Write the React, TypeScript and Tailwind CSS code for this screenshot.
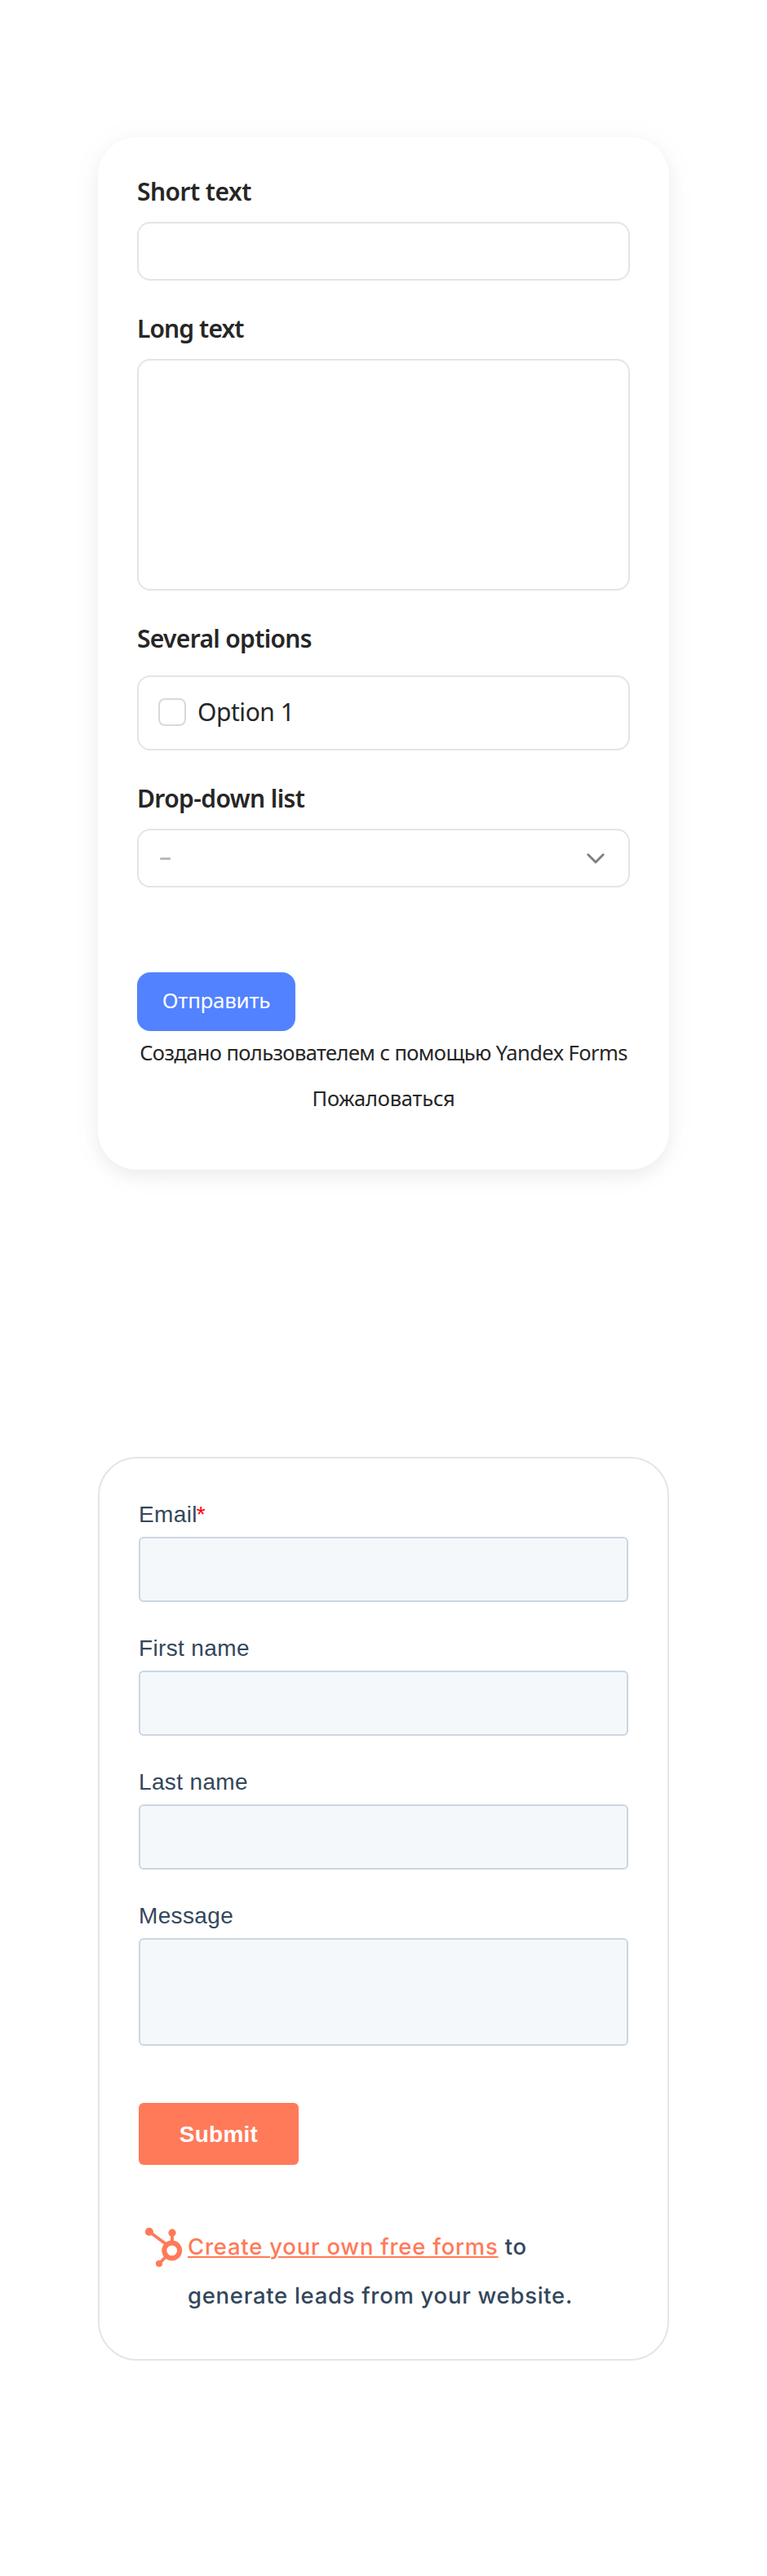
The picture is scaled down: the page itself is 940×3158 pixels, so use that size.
import React from "react";

const label =
  "h-9 w-max whitespace-nowrap pt-px text-[30px] leading-9 font-semibold";
const box = "rounded-2xl border-2 border-[#e5e5e5] bg-white";
const hubInput =
  "w-full rounded-md border-2 border-[#cbd6e2] bg-[#f5f8fa]";

function Field({ title, spacing, children }: { title: string; spacing: string; children: React.ReactNode }) {
  return (
    <div className="mb-10">
      <div className={`${label} ${spacing}`}>{title}</div>
      {children}
    </div>
  );
}

function HubField({ title, required, tall }: { title: string; required?: boolean; tall?: boolean }) {
  return (
    <div className="mb-9">
      <div className="mb-2 h-10 pt-px text-[28px] leading-10 tracking-[0.36px]">
        {title}
        {required && <span className="-ml-px text-[#ff0000]">*</span>}
      </div>
      <div className={`${hubInput} ${tall ? "h-[132px]" : "h-20"}`} />
    </div>
  );
}

function Sprocket() {
  return (
    <svg width="60" height="60" viewBox="170 2724 60 60" className="shrink-0" fill="#ff7a59" stroke="#ff7a59">
      <g stroke="none">
        <circle cx="182.9" cy="2736" r="5.1" />
        <circle cx="211" cy="2737.2" r="4.6" />
        <circle cx="195" cy="2775" r="4.1" />
      </g>
      <circle cx="210.7" cy="2759" r="9.4" fill="none" strokeWidth="6.1" />
      <path d="M183 2736L203 2750.8M211 2737v11M195 2775l8-8" fill="none" strokeWidth="3.8" />
    </svg>
  );
}

export default function App() {
  return (
    <main className="flex h-[3158px] w-[940px] flex-col items-center bg-white pt-[168px]">
      <section className="h-[1266px] w-[700px] rounded-[48px] bg-white p-12 font-['Noto_Sans','Open_Sans',sans-serif] text-[#262626] shadow-[0_8px_20px_rgba(0,0,0,0.05),0_4px_44px_rgba(0,0,0,0.04)]">
        <Field title="Short text" spacing="mb-5 tracking-[-0.55px]">
          <div className={`${box} h-[72px]`} />
        </Field>
        <Field title="Long text" spacing="mb-5 tracking-[-0.9px]">
          <div className={`${box} h-[284px]`} />
        </Field>
        <Field title="Several options" spacing="mb-7 tracking-[-0.68px]">
          <div className={`${box} flex h-[92px] items-center gap-3.5 pb-0.5 pl-6`}>
            <span className="size-[34px] rounded-lg border-2 border-[#d9d9d9]" />
            <span className="text-[30px] leading-9 tracking-[-0.45px]">Option 1</span>
          </div>
        </Field>
        <Field title="Drop-down list" spacing="mb-5 tracking-[-0.6px]">
          <div className={`${box} flex h-[72px] items-center justify-between pl-[25px] pr-7`}>
            <span className="pb-[5px] text-[30px] leading-9 text-[#b3b3b3]">–</span>
            <svg width="24" height="16" viewBox="0 0 24 16" fill="none" stroke="#808080" strokeWidth="3" strokeLinecap="round" strokeLinejoin="round">
              <path d="M2.8 3.8l9.2 9.2 9.2-9.2" />
            </svg>
          </div>
        </Field>
        <button className="mt-[104px] flex h-[72px] w-[194px] items-center justify-center rounded-2xl bg-[#5282ff] pb-1 text-[26px] tracking-[-0.3px] text-white">
          Отправить
        </button>
        <div className="mt-2 flex flex-col items-center gap-5 whitespace-nowrap text-[25.5px] leading-9">
          <span className="tracking-[-0.59px]">Создано пользователем с помощью Yandex Forms</span>
          <span className="tracking-[-0.2px]">Пожаловаться</span>
        </div>
      </section>

      <section className="mt-[352px] h-[1108px] w-[700px] rounded-[48px] border-2 border-[#e5e5e5] bg-white p-12 font-['Liberation_Sans',sans-serif] text-[#33475b]">
        <HubField title="Email" required />
        <HubField title="First name" />
        <HubField title="Last name" />
        <HubField title="Message" tall />
        <button className="mt-[34px] h-[76px] w-[196px] rounded-md bg-[#ff7a59] pt-0.5 text-[28px] font-bold tracking-[0.25px] text-white">
          Submit
        </button>
        <div className="mt-[70px] flex font-['Inter',sans-serif] text-[27.5px] leading-[60px] font-medium tracking-[0.7px]">
          <Sprocket />
          <p className="whitespace-nowrap">
            <span className="tracking-[0.76px] text-[#ff7a59] underline decoration-2 underline-offset-2">Create your own free forms</span> to
            <br />
            generate leads from your website.
          </p>
        </div>
      </section>
    </main>
  );
}
